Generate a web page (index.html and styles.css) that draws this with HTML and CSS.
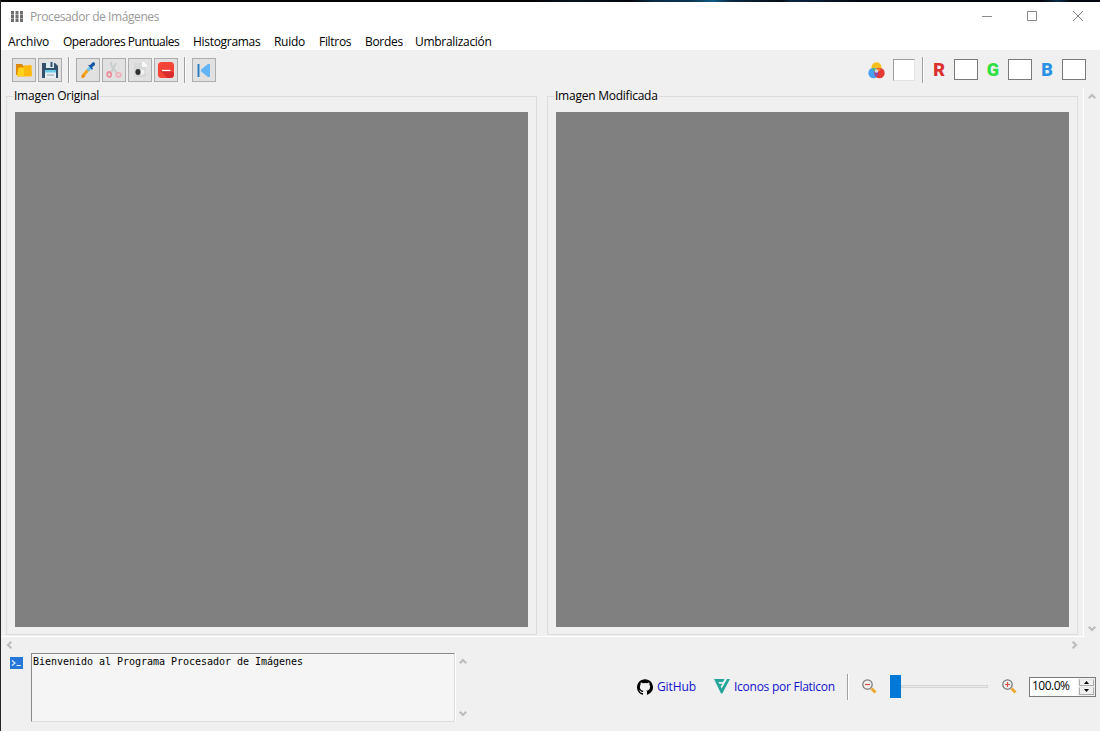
FILE: index.html
```html
<!DOCTYPE html>
<html lang="es">
<head>
<meta charset="utf-8">
<title>Procesador de Imágenes</title>
<link rel="stylesheet" href="styles.css">
</head>
<body>
<div class="window">
  <header class="titlebar">
    <svg class="app-icon" width="12" height="11" viewBox="0 0 12 11" fill="#6e6e6e"><path d="M0 0h3v3H0zM4.500 0h3v3h-3zM9 0h3v3H9zM0 4h3v3H0zM4.500 4h3v3h-3zM9 4h3v3H9zM0 8h3v3H0zM4.500 8h3v3h-3zM9 8h3v3H9z"/><path d="M0 3h3v1H0zM4.500 3h3v1h-3zM9 3h3v1H9zM0 7h3v1H0zM4.500 7h3v1h-3zM9 7h3v1H9z" opacity=".6"/></svg>
    <span class="title">Procesador de Imágenes</span>
    <div class="controls">
      <svg width="10" height="10" viewBox="0 0 10 10"><path d="M0 5.500h10" stroke="#8c8c8c"/></svg>
      <svg width="10" height="10" viewBox="0 0 10 10"><path d="M.5.5h9v9h-9z" fill="none" stroke="#8c8c8c"/></svg>
      <svg width="10" height="10" viewBox="0 0 10 10"><path d="M0 0l10 10M10 0L0 10" stroke="#7c7c7c"/></svg>
    </div>
  </header>
  <nav class="menu">
    <span class="m1">Archivo</span><span class="m2">Operadores Puntuales</span><span class="m3">Histogramas</span><span class="m4">Ruido</span><span class="m5">Filtros</span><span class="m6">Bordes</span><span class="m7">Umbralización</span>
  </nav>
  <div class="toolbar">
    <button class="tool"><svg width="16" height="14" viewBox="0 0 16 14"><path d="M0 1h6l1.500 2H15v9H0z" fill="#dd8a08"/><path d="M2 4.500l5-.5 1.500-1.500 7-.5.5 10.500-1 1H1z" fill="#ffb80d"/><path d="M3 5h5v8H1z" fill="#ffd21c"/></svg></button>
    <button class="tool"><svg width="16" height="16" viewBox="0 0 16 16"><path d="M0 1h13l3 3v12H0z" fill="#35506b"/><path d="M4 0h8v6H4z" fill="#dcebf0"/><path d="M8.500 0h2v5h-2z" fill="#35506b"/><path d="M3 8h11v8H3z" fill="#e6f0f3"/><path d="M3 8h11v2.500H3z" fill="#69cde8"/><path d="M5 13h7" stroke="#8b9ca8"/></svg></button>
    <i class="sep"></i>
    <button class="tool"><svg width="14" height="16" viewBox="0 0 14 16"><path d="M2.500 13L8 7" stroke="#f8a51b" stroke-width="3"/><path d="M.5 13l2-1 2 2-2 2H.5z" fill="#ef9212"/><path d="M6.500 8.500l3-3" stroke="#67c8ee" stroke-width="3"/><path d="M7 3l4 5 1-1.500-1-1L14 3V1l-2-1-3 3z" fill="#1857a6"/></svg></button>
    <button class="tool"><svg width="16" height="16" viewBox="0 0 16 16" fill="none"><path d="M5 0l.5 4L11 11M10 1L5 11" stroke="#c9cdce" stroke-width="2"/><ellipse cx="3.200" cy="12.500" rx="2" ry="2.500" stroke="#ee8d9c" stroke-width="1.800"/><ellipse cx="12.500" cy="12.800" rx="2.300" ry="2" stroke="#f1b0b9" stroke-width="1.800"/></svg></button>
    <button class="tool"><svg width="16" height="16" viewBox="0 0 16 16"><path d="M2 1h9l3 3v11H2z" fill="#d7d8d8"/><path d="M10 0h2l3 3v2h-5z" fill="#f8f8f8"/><circle cx="10" cy="10" r="2.600" fill="#f2f2f2"/><ellipse cx="6" cy="10" rx="2.600" ry="3" fill="#303030"/></svg></button>
    <button class="tool"><svg width="16" height="16" viewBox="0 0 16 16"><rect width="16" height="16" rx="3.500" fill="#f54336"/><path d="M3 9h10l3 2v1a4 4 0 0 1-4 4H9z" fill="#d92b2b"/><path d="M4 8.500h8.500" stroke="#fff" stroke-width="1.300"/></svg></button>
    <i class="sep"></i>
    <button class="tool"><svg class="rewind" width="14" height="14" viewBox="0 0 14 14"><path d="M.5 0h2v13h-2z" fill="#2e80c1"/><path d="M13 0v13h-2L4 7.500v-2L11 0z" fill="#64b5f6"/></svg></button>
    <div class="channels">
      <svg class="rgb" width="17" height="17" viewBox="0 0 17 17"><circle cx="8.500" cy="5.200" r="5" fill="#f5c01e"/><circle cx="5.500" cy="11" r="5.200" fill="#47a0f4"/><circle cx="11.500" cy="11" r="5.200" fill="#e43b36"/><path d="M3.800 6.300a5 5 0 0 1 4.700 2 5 5 0 0 1-1 1.300 5 5 0 0 1-3.700-3.300z" fill="#54bd5b"/><path d="M8.500 8.300a5 5 0 0 1 4.600-1.900 5 5 0 0 1-4 3.400z" fill="#f5822d"/><path d="M8.500 7.500a5 5 0 0 1 0 7.500 5 5 0 0 1 0-7.500z" fill="#8d48b5"/><circle cx="8.500" cy="9" r="1.700" fill="#ddd"/></svg>
      <span class="swatch flat"></span><i class="sep"></i>
      <b class="ch red">R</b><span class="swatch"></span>
      <b class="ch green">G</b><span class="swatch"></span>
      <b class="ch blue">B</b><span class="swatch"></span>
    </div>
  </div>
  <main class="workspace">
    <div class="viewport">
      <fieldset class="group"><legend>Imagen Original</legend><div class="canvas"></div></fieldset>
      <fieldset class="group"><legend>Imagen Modificada</legend><div class="canvas"></div></fieldset>
    </div>
    <div class="vscroll">
      <svg width="8" height="7" viewBox="0 0 8 7"><path d="M.7 5.300L4 2l3.300 3.300" class="chev"/></svg>
      <svg width="8" height="7" viewBox="0 0 8 7"><path d="M.7 1.700L4 5l3.300-3.300" class="chev"/></svg>
    </div>
  </main>
  <div class="hscroll">
    <svg width="7" height="8" viewBox="0 0 7 8"><path d="M5.300.7L2 4l3.300 3.300" class="chev"/></svg>
    <svg width="7" height="8" viewBox="0 0 7 8"><path d="M1.700.7L5 4 1.700 7.300" class="chev"/></svg>
  </div>
  <footer class="bottom">
    <svg class="term" width="13" height="12" viewBox="0 0 13 12"><path d="M0 0h13v12H0z" fill="#2677da"/><path d="M2 3.500L5 6 2 8.500M6.500 8.500H11" fill="none" stroke="#e3f1ff" stroke-width="1.200"/></svg>
    <div class="console">Bienvenido al Programa Procesador de Imágenes</div>
    <div class="logscroll">
      <svg width="8" height="7" viewBox="0 0 8 7"><path d="M.7 5.300L4 2l3.300 3.300" class="chev"/></svg>
      <svg width="8" height="7" viewBox="0 0 8 7"><path d="M.7 1.700L4 5l3.300-3.300" class="chev"/></svg>
    </div>
    <div class="status">
      <svg class="gh" width="16" height="16" viewBox="0 0 16 16"><path d="M8 .2C3.600.2 0 3.800 0 8.200c0 3.500 2.300 6.500 5.500 7.600.4.100.5-.2.500-.4v-1.500c-2.200.5-2.700-.9-2.700-.9-.4-.9-.9-1.200-.9-1.200-.7-.5.1-.5.1-.5.800.1 1.200.8 1.200.8.700 1.200 1.900.9 2.300.7.100-.5.300-.9.500-1.100-1.800-.2-3.600-.9-3.600-4 0-.9.300-1.600.8-2.100-.1-.2-.4-1 .1-2.100 0 0 .7-.2 2.200.8a7.600 7.600 0 0 1 4 0c1.500-1 2.200-.8 2.200-.8.400 1.100.200 1.900.100 2.100.5.600.8 1.300.8 2.100 0 3.100-1.900 3.700-3.700 3.900.3.300.6.800.6 1.500v2.300c0 .2.100.5.500.4A8 8 0 0 0 8 .2z"/></svg>
      <a class="link gl">GitHub</a>
      <svg class="flat-icon" width="16" height="15" viewBox="0 0 16 15" fill="#25a59b"><path d="M0 0h10.500L9 3H4.300l1 1.800h3L7 7.300h-.5l1.200 2.200L13 0h3L8.300 14.500H7z"/></svg>
      <a class="link fl">Iconos por Flaticon</a>
      <i class="sep"></i>
      <svg class="lens" width="15" height="15" viewBox="0 0 15 15" fill="none"><circle cx="5.500" cy="5.500" r="4.700" stroke="#777" stroke-width="1.200"/><path d="M3 5.500h5" stroke="#dc4b45" stroke-width="1.200"/><path d="M9.500 9.500l4 4" stroke="#eda92d" stroke-width="3"/></svg>
      <div class="slider"><span class="thumb"></span><span class="track"></span></div>
      <svg class="lens" width="15" height="15" viewBox="0 0 15 15" fill="none"><circle cx="5.500" cy="5.500" r="4.700" stroke="#777" stroke-width="1.200"/><path d="M3 5.500h5M5.500 3v5" stroke="#dc4b45" stroke-width="1.200"/><path d="M9.500 9.500l4 4" stroke="#eda92d" stroke-width="3"/></svg>
      <div class="spin"><span class="value">100.0%</span>
        <div class="arrows"><span><svg width="5" height="3" viewBox="0 0 5 3"><path d="M2.500 0L5 3H0z"/></svg></span><span><svg width="5" height="3" viewBox="0 0 5 3"><path d="M0 0h5L2.500 3z"/></svg></span></div>
      </div>
    </div>
  </footer>
</div>
</body>
</html>
```

FILE: styles.css
```css
* { box-sizing: border-box; }
body { margin: 0; background: #f0f0f0; font: 12px/16px "Open Sans", "Noto Sans", sans-serif; color: #000; overflow: hidden; }
svg { display: block; flex: none; }
.window {
  width: 1100px; height: 731px; display: flex; flex-direction: column;
  border-left: 1px solid #252525;
  background: linear-gradient(90deg, #040404 0 530px, #071321 575px, #04060c 630px, #0a2b43 650px, #0b3550 690px, #105a86 712px, #0b2a42 730px, #060b17 780px, #0a2741 790px, #04070f 860px, #03050c 1040px, #0b2b45 1057px, #04070f 1070px) 0 0 / 100% 2px no-repeat;
  padding-top: 2px;
}
.titlebar { height: 30px; background: #fff; display: flex; align-items: center; padding: 0 17px 0 10px; flex: none; }
.app-icon { margin-top: -2px; }
.title { margin-left: 7px; color: #999; letter-spacing: -.42px; }
.controls { margin-left: auto; display: flex; gap: 36px; margin-top: -2px; }
.controls svg:first-child { margin-right: -1px; }
.menu { height: 18px; background: #fff; display: flex; gap: 14px; padding: 2px 0 0 7px; flex: none; white-space: nowrap; }
.menu span { letter-spacing: -.3px; }
.menu .m1 { width: 41px; letter-spacing: -.1px; }
.menu .m2 { width: 116px; letter-spacing: -.47px; }
.m3 { width: 67px; }
.m4 { width: 31px; }
.m5 { width: 32px; }
.m6 { width: 36px; }
.m7 { width: 76px; }
.toolbar { height: 38px; display: flex; align-items: flex-start; gap: 2px; padding: 8px 14px 0 11px; flex: none; }
.tool { width: 24px; height: 24px; padding: 0; border: 1px solid #adadad; background: #e1e1e1; display: flex; align-items: center; justify-content: center; }
.rewind { margin-top: 1px; }
.sep { width: 2px; height: 26px; border-left: 1px solid #a0a0a0; border-right: 1px solid #fff; flex: none; }
.toolbar > .sep { margin: -1px 4px 0; }
.channels { margin-left: auto; display: flex; align-items: flex-start; }
.rgb { margin: 4px 8px 0 0; }
.swatch { width: 24px; height: 21px; border: 1px solid #7a7a7a; background: #fff; margin-top: 1px; }
.swatch.flat { width: 22px; height: 22px; border-color: #a0a0a0 #e3e3e3 #e3e3e3 #a0a0a0; margin-right: 7px; }
.channels .sep { margin-top: -1px; }
.ch { width: 30px; font: 900 18px/22px Roboto, sans-serif; text-align: center; margin-top: 1px; }
.red { color: #dc3030; }
.green { color: #2fe044; }
.blue { color: #2b91e4; }
.workspace { height: 549px; display: flex; flex: none; }
.viewport { width: 1083px; display: flex; gap: 10px; padding: 0 0 0 5px; border: solid #fff; border-width: 0 1px 1px 0; }
.group { width: 531px; height: 547px; margin: 0; padding: 8px 8px 0; border: 1px solid #dcdcdc; min-width: 0; flex: none; }
.group legend { padding: 0 1px; margin-left: -2px; white-space: nowrap; letter-spacing: -.24px; }
.canvas { width: 513px; height: 515px; background: #808080; }
.vscroll { display: flex; flex-direction: column; justify-content: space-between; padding: 5px 0 5px 4px; }
.chev { fill: none; stroke: #bdbdbd; stroke-width: 2.200; }
.hscroll { height: 16px; display: flex; justify-content: space-between; padding: 4px 22px 0 5px; flex: none; }
.bottom { display: flex; align-items: flex-start; height: 78px; }
.term { margin: 4px 0 0 9px; }
.console { width: 424px; height: 69px; margin-left: 8px; padding: 0 1px; border: 1px solid; border-color: #8a8a8a #dedede #dedede #8a8a8a; box-shadow: 1px 0 #fff; background: #f5f5f5; font: 10px/16px "DejaVu Sans Mono", monospace; letter-spacing: -.02px; white-space: nowrap; }
.logscroll { height: 69px; display: flex; flex-direction: column; justify-content: space-between; padding: 5px 0 5px; margin-left: 4px; }
.status { margin-left: auto; padding-right: 4px; height: 67px; display: flex; align-items: center; white-space: nowrap; }
.link { color: #1111cc; letter-spacing: -.26px; }
.gl { width: 38px; margin: 0 19px 0 4px; letter-spacing: -.1px; }
.fl { width: 101px; margin: 0 12px 0 4px; }
.status .sep { margin-right: 13px; }
.slider { width: 98px; height: 23px; display: flex; align-items: center; margin: 0 14px 0 13px; }
.thumb { width: 11px; height: 23px; background: #0078d7; }
.track { flex: 1; height: 3px; border: 1px solid #d6d6d6; background: #e7eaea; }
.spin { width: 67px; height: 20px; border: 1px solid #7a7a7a; background: #fff; margin-left: 12px; padding: 1px 0 1px 2px; display: flex; justify-content: space-between; align-items: center; }
.value { letter-spacing: -.5px; margin-top: -2px; }
.arrows { width: 17px; height: 18px; background: #f0f0f0; padding: 1px; display: flex; flex-direction: column; gap: 1px; }
.arrows span { flex: 1; border: 1px solid #acacac; border-top-color: #e8e8e8; display: flex; align-items: center; justify-content: center; }
```
